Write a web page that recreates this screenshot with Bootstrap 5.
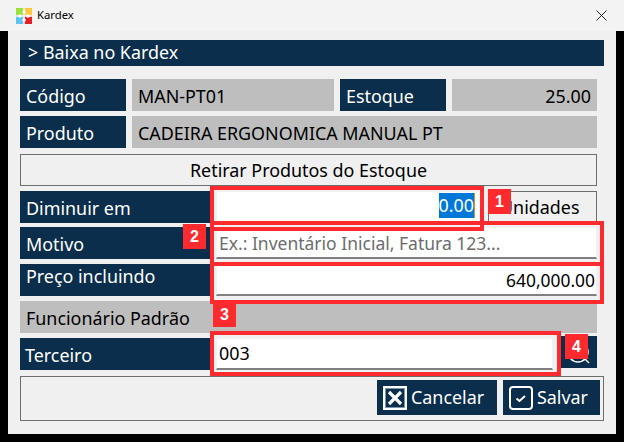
<!DOCTYPE html>
<html lang="pt">
<head>
<meta charset="utf-8">
<title>Kardex</title>
<link href="https://cdn.jsdelivr.net/npm/bootstrap@5.3.0/dist/css/bootstrap.min.css" rel="stylesheet">
<style>
html,body{height:442px;overflow:hidden;background:#000}
body{font-family:"Noto Sans","Open Sans",sans-serif;font-size:17.9px;color:#000;position:relative}
.kx-title{height:31px;background:#f3f3f3;padding:0 16px;font-size:11.3px;gap:5px;font-family:"Noto Sans",sans-serif}
.kx-close{margin-left:auto;margin-right:1px;line-height:0}
.kx-body{margin:0 8px;height:403px;background:#f0f0f0;padding:9px 12px 0}
.kx-head{height:26px;width:584px;background:#0a2e4b;color:#fff;padding-left:8px;line-height:25px}
.kx-row{height:32px;width:577px;gap:6px}
.kx-lab{background:#0a2e4b;color:#fff;padding-left:6px;line-height:34px;flex:0 0 auto}
.kx-lab-up{line-height:24px}
.kx-w1{width:106px}.kx-w2{width:190px}
.kx-ro{background:#bebebe;padding:0 6px;line-height:34px;white-space:nowrap}
.kx-box{border:1px solid #6d6d6d;line-height:30px;text-align:center}
.kx-in{width:100%;height:32px;background:#fff;border:1px solid #f2f2f2;border-bottom:2px solid #808080;padding:0 1px 0 2px;line-height:31px;white-space:nowrap}
.kx-sel{background:#0078d7;color:#fff;display:inline-block;line-height:25px;border-right:1px solid #e08a20;margin-right:5px;vertical-align:2px}
.kx-ph{color:#6d6d6d;font-size:17.5px;line-height:30px}
.kx-price{font-size:17.4px}
.kx-third{line-height:28px}
.kx-unit{padding-left:11px}
.kx-foot{width:584px;height:45px;border:1px solid #6d6d6d;margin-top:6px;padding:3px 3px 0 0;gap:6px}
.kx-btn{height:35px;background:#0a2e4b;color:#fff;border-radius:0;gap:4px;padding:0 0 0 5px;font-size:17.9px;line-height:35px}
.kx-search{width:36px;height:32px;background:#0a2e4b;margin:-2px 0 0 auto;overflow:hidden}
.kx-mark{position:absolute;border:4px solid #ff2a2e;pointer-events:none}
.kx-num{position:absolute;width:23px;height:25px;background:#ff2a2e;color:#fff;font:700 16px/25px "Liberation Sans",sans-serif;text-align:center}
</style>
</head>
<body>
<div class="kx-title d-flex align-items-center">
  <svg width="16" height="16" viewBox="0 0 16 16"><rect width="7.2" height="7.2" fill="#9be23c"/><rect x="8.8" width="7.2" height="7.2" fill="#ffc83d"/><rect y="8.8" width="7.2" height="7.2" fill="#5cc4ee"/><rect x="8.8" y="8.8" width="7.2" height="7.2" fill="#e32028"/><circle cx="8" cy="4" r="1.8" fill="#fff"/><circle cx="8" cy="12" r="1.8" fill="#fff"/><circle cx="4" cy="8" r="1.8" fill="#fff"/><circle cx="12" cy="8" r="1.8" fill="#fff"/></svg>
  <span>Kardex</span>
  <span class="kx-close"><svg width="11" height="11" viewBox="0 0 11 11"><path d="M.5.5l10 10M10.5.5l-10 10" stroke="#222" fill="none"/></svg></span>
</div>
<div class="kx-body">
  <div class="kx-head">&gt; Baixa no Kardex</div>
  <div class="kx-row d-flex" style="margin-top:13px">
    <div class="kx-lab kx-w1">Código</div>
    <div class="kx-ro" style="width:202px">MAN-PT01</div>
    <div class="kx-lab kx-w1">Estoque</div>
    <div class="kx-ro text-end flex-grow-1">25.00</div>
  </div>
  <div class="kx-row d-flex" style="margin-top:5px">
    <div class="kx-lab kx-w1">Produto</div>
    <div class="kx-ro flex-grow-1">CADEIRA ERGONOMICA MANUAL PT</div>
  </div>
  <div class="kx-row kx-box" style="margin-top:6px">Retirar Produtos do Estoque</div>
  <div class="kx-row d-flex" style="margin-top:5px">
    <div class="kx-lab kx-w2">Diminuir em</div>
    <div class="kx-in text-end" style="width:266px"><span class="kx-sel">0.00</span></div>
    <div class="kx-box kx-unit flex-grow-1 text-start">Unidades</div>
  </div>
  <div class="kx-row d-flex" style="margin-top:4px">
    <div class="kx-lab kx-w2">Motivo</div>
    <div class="kx-in kx-ph">Ex.: Inventário Inicial, Fatura 123...</div>
  </div>
  <div class="kx-row d-flex" style="margin-top:5px">
    <div class="kx-lab kx-lab-up kx-w2">Preço incluindo</div>
    <div class="kx-in kx-price text-end">640,000.00</div>
  </div>
  <div class="kx-row kx-ro" style="margin-top:5px;padding-left:6px">Funcionário Padrão</div>
  <div class="kx-row d-flex" style="margin-top:5px">
    <div class="kx-lab" style="width:190px;padding-left:5px">Terceiro</div>
    <div class="kx-in kx-third" style="width:337px">003</div>
    <div class="kx-search">
      <svg width="36" height="32" viewBox="0 0 36 32"><circle cx="17" cy="16" r="10" fill="none" stroke="#fff" stroke-width="1.5"/><path d="M24 23l4 4" stroke="#fff" stroke-width="1.5"/></svg>
    </div>
  </div>
  <div class="kx-foot d-flex justify-content-end">
    <button type="button" class="btn kx-btn d-flex align-items-center" style="width:120px">
      <svg width="24" height="24" viewBox="0 0 24 24"><rect x="1" y="1" width="22" height="22" fill="none" stroke="#fff" stroke-width="2"/><rect x="2.5" y="2.5" width="19" height="19" fill="none" stroke="#7f97aa"/><path d="M6 6l12 12M18 6L6 18" stroke="#fff" stroke-width="3.2"/></svg>
      <span>Cancelar</span>
    </button>
    <button type="button" class="btn kx-btn d-flex align-items-center" style="width:97px">
      <svg width="24" height="24" viewBox="0 0 24 24"><rect x="1" y="1" width="22" height="22" rx="3" fill="none" stroke="#fff" stroke-width="2"/><path d="M7.5 12.5l3 2.5 5.5-5" fill="none" stroke="#fff" stroke-width="2"/></svg>
      <span>Salvar</span>
    </button>
  </div>
</div>
<div class="kx-mark" style="left:210px;top:186px;width:274px;height:45px"></div>
<div class="kx-mark" style="left:210px;top:221px;width:394px;height:45px"></div>
<div class="kx-mark" style="left:210px;top:262px;width:394px;height:42px"></div>
<div class="kx-mark" style="left:210px;top:331px;width:351px;height:45px"></div>
<div class="kx-num" style="left:488px;top:189px">1</div>
<div class="kx-num" style="left:183px;top:224px">2</div>
<div class="kx-num" style="left:213px;top:302px">3</div>
<div class="kx-num" style="left:565px;top:334px">4</div>
</body>
</html>
